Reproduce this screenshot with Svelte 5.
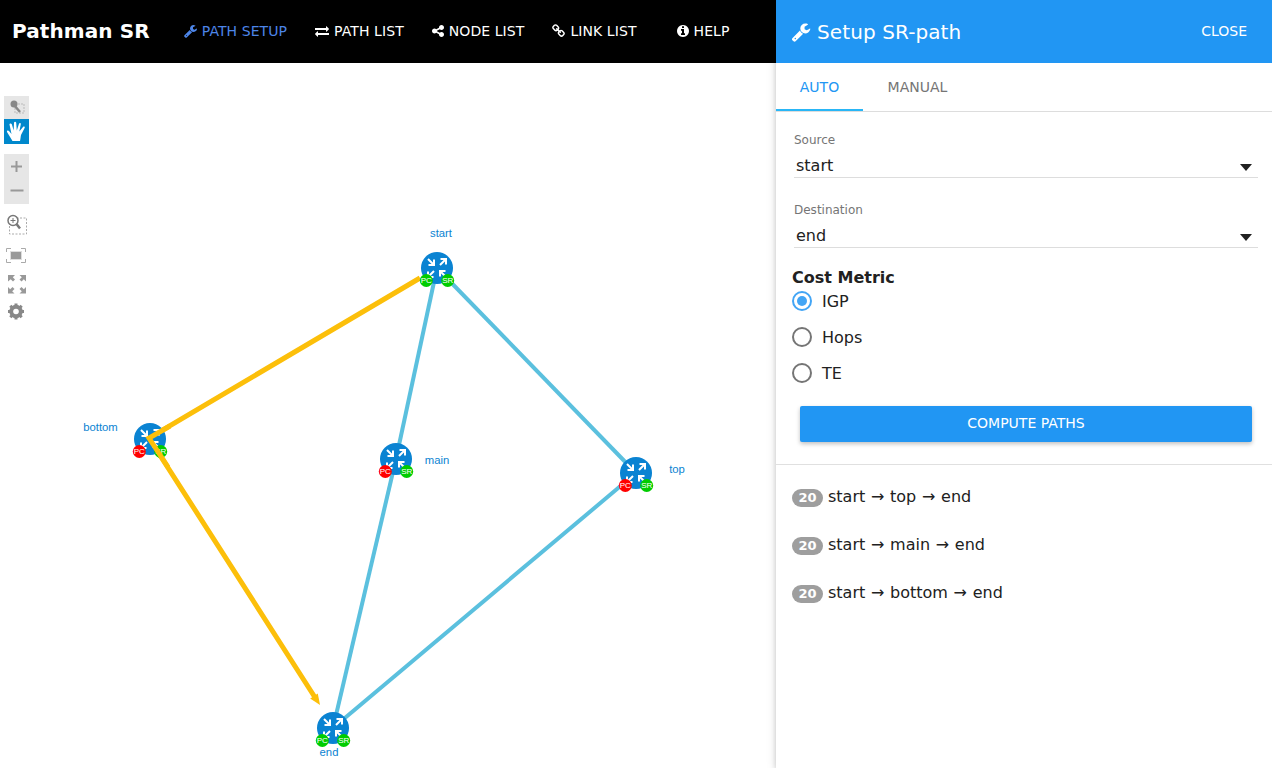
<script>
    const icons = {
        wrench: "M448 1472q0-26-19-45t-45-19-45 19-19 45 19 45 45 19 45-19 19-45zm644-420l-682 682q-37 37-90 37-52 0-91-37l-106-108q-38-36-38-90 0-53 38-91l681-681q39 98 114.5 173.5t173.5 114.5zm634-435q0 39-23 106-47 134-164.5 217.5t-258.5 83.5q-185 0-316.5-131.5t-131.5-316.5 131.5-316.5 316.5-131.5q58 0 121.5 16.5t107.5 46.5q16 11 16 28t-16 28l-293 169v224l193 107q5-3 79-48.5t135.5-81 70.5-35.5q15 0 23.5 10t8.5 25z",
        exchange: "M1792 1184v192q0 13-9.5 22.5t-22.5 9.5h-1376v192q0 13-9.5 22.5t-22.5 9.5q-12 0-24-10l-319-320q-9-9-9-22 0-14 9-23l320-320q9-9 23-9 13 0 22.5 9.5t9.5 22.5v192h1376q13 0 22.5 9.5t9.5 22.5zm0-544q0 14-9 23l-320 320q-9 9-23 9-13 0-22.5-9.5t-9.5-22.5v-192h-1376q-13 0-22.5-9.5t-9.5-22.5v-192q0-13 9.5-22.5t22.5-9.5h1376v-192q0-14 9-23t23-9q12 0 24 10l319 319q9 9 9 23z",
        share: "M1344 1024q133 0 226.5 93.5t93.5 226.5-93.5 226.5-226.5 93.5-226.5-93.5-93.5-226.5q0-12 2-34l-360-180q-92 86-218 86-133 0-226.5-93.5t-93.5-226.5 93.5-226.5 226.5-93.5q126 0 218 86l360-180q-2-22-2-34 0-133 93.5-226.5t226.5-93.5 226.5 93.5 93.5 226.5-93.5 226.5-226.5 93.5q-126 0-218-86l-360 180q2 22 2 34t-2 34l360 180q92-86 218-86z",
        link: "M1520 1216q0-40-28-68l-208-208q-28-28-68-28-42 0-72 32 3 3 19 18.5t21.5 21.5 15 19 13 25.5 3.5 27.5q0 40-28 68t-68 28q-15 0-27.5-3.5t-25.5-13-19-15-21.5-21.5-18.5-19q-33 31-33 73 0 40 28 68l206 207q27 27 68 27 40 0 68-26l147-146q28-28 28-67zm-703-705q0-40-28-68l-206-207q-28-28-68-28-39 0-68 27l-147 146q-28 28-28 67 0 40 28 68l208 208q27 27 68 27 42 0 72-31-3-3-19-18.5t-21.5-21.5-15-19-13-25.5-3.5-27.5q0-40 28-68t68-28q15 0 27.5 3.5t25.5 13 19 15 21.5 21.5 18.5 19q33-31 33-73zm895 705q0 120-85 203l-147 146q-83 83-203 83-121 0-204-85l-206-207q-83-83-83-203 0-123 88-209l-88-88q-86 88-208 88-120 0-204-84l-208-208q-84-84-84-204t85-203l147-146q83-83 203-83 121 0 204 85l206 207q83 83 83 203 0 123-88 209l88 88q86-88 208-88 120 0 204 84l208 208q84 84 84 204z",
        info: "M1152 1376v-160q0-14-9-23t-23-9h-96v-512q0-14-9-23t-23-9h-320q-14 0-23 9t-9 23v160q0 14 9 23t23 9h96v320h-96q-14 0-23 9t-9 23v160q0 14 9 23t23 9h448q14 0 23-9t9-23zm-128-896v-160q0-14-9-23t-23-9h-192q-14 0-23 9t-9 23v160q0 14 9 23t23 9h192q14 0 23-9t9-23zm640 416q0 209-103 385.5t-279.5 279.5-385.5 103-385.5-103-279.5-279.5-103-385.5 103-385.5 279.5-279.5 385.5-103 385.5 103 279.5 279.5 103 385.5z"
    };

    const navItems = [
        { label: "PATH SETUP", icon: "wrench", w: 13, active: true },
        { label: "PATH LIST", icon: "exchange", w: 14 },
        { label: "NODE LIST", icon: "share", w: 12 },
        { label: "LINK LIST", icon: "link", w: 13 },
        { label: "HELP", icon: "info", w: 12, help: true }
    ];

    const nodes = {
        start: { x: 437, y: 205, lx: 441, ly: 174, pc: "#00cc00" },
        bottom: { x: 150, y: 376, lx: 100.500, ly: 368, pc: "#ff0000" },
        main: { x: 396, y: 396, lx: 437, ly: 401, pc: "#ff0000" },
        top: { x: 636, y: 410, lx: 677, ly: 410, pc: "#ff0000" },
        end: { x: 333, y: 665, lx: 329, ly: 693, pc: "#00cc00" }
    };

    const links = [
        ["start", "main"],
        ["start", "top"],
        ["main", "end"],
        ["top", "end"]
    ];

    const routes = [
        { cost: 20, hops: "start → top → end" },
        { cost: 20, hops: "start → main → end" },
        { cost: 20, hops: "start → bottom → end" }
    ];

    const metrics = ["IGP", "Hops", "TE"];
</script>

<div class="page">
    <div class="left">
        <nav>
            <span class="brand">Pathman SR</span>
            {#each navItems as item}
                <a href="#top" class:active={item.active} class:help={item.help}>
                    <svg class="fa" width={item.w} height="14" viewBox="0 0 1792 1792" preserveAspectRatio="xMidYMid slice"><path d={icons[item.icon]} /></svg>{item.label}
                </a>
            {/each}
        </nav>

        <div class="canvas">
            <svg class="graph" width="776" height="705" viewBox="0 0 776 705">
                <defs>
                    <g id="arrows" fill="none" stroke="#fff" stroke-width="2">
                        <path d="M-9-9L-3-3M-8.500-3H-3V-8.500" />
                        <path d="M3-3L9-9M3.500-9H9V-3.500" />
                        <path d="M-3 3L-9 9M-9 3.500V9H-3.500" />
                        <path d="M9 9L3 3M3 8.500V3H8.500" />
                    </g>
                </defs>

                {#each links as [a, b]}
                    <line x1={nodes[a].x} y1={nodes[a].y} x2={nodes[b].x} y2={nodes[b].y} class="link" />
                {/each}

                <polyline points="420,215 149,375 316,636" class="route" />
                <path d="M320 642L310.200 635.400L317.800 630.600Z" fill="#fcbf0a" />

                {#each Object.entries(nodes) as [name, n]}
                    <g transform="translate({n.x} {n.y})">
                        <circle r="16" fill="#0a83d2" />
                        <use href="#arrows" />
                        <circle cx="-10.700" cy="12.500" r="6.500" fill={n.pc} />
                        <circle cx="10.700" cy="12.500" r="6.500" fill="#00cc00" />
                        <text x="-10.700" y="15.300" class="badge">PC</text>
                        <text x="10.700" y="15.300" class="badge">SR</text>
                    </g>
                    <text x={n.lx} y={n.ly} class="node-label">{name}</text>
                {/each}

                <!-- the route runs over the bottom node, not under it -->
                <polyline points="168,404 149,375 170,363" class="route" />
            </svg>

            <div class="tools">
                <div class="tool-group">
                    <button class="tool select-tool"><svg viewBox="0 0 25 23" width="25" height="23">
                        <rect x="11" y="8" width="9" height="9" fill="none" stroke="#bbb" stroke-dasharray="2 1" />
                        <circle cx="10" cy="8" r="3.500" fill="#888" />
                        <path d="M10 9L16 16" stroke="#888" stroke-width="2.500" />
                    </svg></button>
                    <button class="tool on"><svg viewBox="0 0 25 25" width="25" height="25">
                        <path d="M8.500 22L3 13C2.500 11.500 4.200 11 5 12L7.500 15L5.500 5.500C5.500 4.200 7.300 4 7.800 5.300L9.700 11.500L10 3.800C10.200 2.500 12 2.500 12.200 3.800L12.800 11.500L15 4.800C15.500 3.600 17 4 16.800 5.300L15.300 12.500L19 8C19.900 7 21.300 7.800 20.600 9L17 16C16.500 18.500 16.500 20 16 22Z" fill="#fff" />
                    </svg></button>
                </div>
                <div class="tool-group zoom">
                    <button class="tool"><svg viewBox="0 0 25 25" width="25" height="25"><path d="M7 12.500H18M12.500 7V18" stroke="#999" stroke-width="2" /></svg></button>
                    <button class="tool"><svg viewBox="0 0 25 25" width="25" height="25"><path d="M6.500 11.500H19.500" stroke="#999" stroke-width="2" /></svg></button>
                </div>
                <button class="tool box"><svg viewBox="0 0 25 25" width="25" height="25">
                    <rect x="5.500" y="7" width="17" height="16" fill="none" stroke="#aaa" stroke-dasharray="2 1.500" />
                    <circle cx="9" cy="9.500" r="5" fill="#fff" stroke="#777" stroke-width="1.500" />
                    <path d="M12.500 13L16 17.500" stroke="#777" stroke-width="2.500" />
                    <path d="M6.500 9.500H11.500M9 7V12" stroke="#777" />
                </svg></button>
                <button class="tool fit"><svg viewBox="0 0 25 25" width="25" height="25">
                    <path d="M2.500 9V5.500H7M17 5.500H21.500V9M2.500 16V19.500H7M17 19.500H21.500V16" fill="none" stroke="#aaa" />
                    <rect x="6.500" y="8.500" width="11" height="8" fill="#999" stroke="#ddd" />
                </svg></button>
                <button class="tool expand"><svg viewBox="0 0 25 25" width="25" height="25" fill="#999">
                    <path d="M4 3H11L8.800 5.200L11 7.500L9 9.500L6.700 7.200L4 9.500Z" />
                    <path d="M22 3V9.500L19.800 7.200L17.500 9.500L15.500 7.500L17.800 5.200L15.500 3Z" />
                    <path d="M4 21.500V15L6.200 17.200L8.500 15L10.500 17L8.200 19.300L10.500 21.500Z" />
                    <path d="M22 21.500H15.500L17.800 19.300L15.500 17L17.500 15L19.800 17.200L22 15Z" />
                </svg></button>
                <button class="tool gear"><svg viewBox="0 0 25 25" width="25" height="25">
                    <circle cx="12" cy="12.500" r="5" fill="none" stroke="#888" stroke-width="3.500" />
                    <path d="M12 4.500V20.500M4 12.500H20M6.300 6.800L17.700 18.200M17.700 6.800L6.300 18.200" stroke="#888" stroke-width="3" />
                    <circle cx="12" cy="12.500" r="2.800" fill="#fff" />
                </svg></button>
            </div>
        </div>
    </div>

    <aside>
        <header>
            <svg class="fa big" viewBox="0 0 1792 1792"><path d={icons.wrench} /></svg>
            <h2>Setup SR-path</h2>
            <span class="close">CLOSE</span>
        </header>

        <div class="tabs">
            <span class="tab current">AUTO</span>
            <span class="tab">MANUAL</span>
        </div>

        <div class="form">
            <div class="field">
                <span class="field-label">Source</span>
                <div class="select">start</div>
            </div>
            <div class="field">
                <span class="field-label">Destination</span>
                <div class="select">end</div>
            </div>

            <h4>Cost Metric</h4>
            {#each metrics as metric, i}
                <div class="radio">
                    <span class="dot" class:checked={i === 0}></span>{metric}
                </div>
            {/each}

            <button class="compute">COMPUTE PATHS</button>
        </div>

        <ul>
            {#each routes as route}
                <li><span class="cost">{route.cost}</span>{route.hops}</li>
            {/each}
        </ul>
    </aside>
</div>

<style>
    :global(body) {
        margin: 0;
        overflow: hidden;
        font-family: "DejaVu Sans", sans-serif;
        color: #212121;
        background: #fff;
    }

    .page {
        display: flex;
        width: 1272px;
        height: 768px;
    }

    .left {
        width: 776px;
        flex: none;
    }

    nav {
        display: flex;
        align-items: center;
        height: 63px;
        box-sizing: border-box;
        padding: 0 0 1px 12px;
        background: #000;
    }

    .brand {
        color: #fff;
        font-size: 20px;
        font-weight: 700;
        letter-spacing: 0.1px;
        margin-right: 34px;
    }

    nav a {
        display: flex;
        align-items: center;
        color: #fff;
        font-size: 14px;
        letter-spacing: 0.08px;
        text-decoration: none;
        margin-right: 28px;
    }

    nav a.active {
        color: #4d85e8;
    }

    nav a.help {
        margin-left: 12px;
    }

    .fa {
        flex: none;
        margin-right: 5px;
        fill: currentColor;
    }

    .canvas {
        position: relative;
        height: 705px;
    }

    .graph {
        display: block;
    }

    .link {
        stroke: #5bc0de;
        stroke-width: 4;
    }

    .route {
        fill: none;
        stroke: #fcbf0a;
        stroke-width: 5;
    }

    .node-label {
        font-family: "Liberation Sans", sans-serif;
        font-size: 11.300px;
        fill: #0a83d2;
        text-anchor: middle;
    }

    .badge {
        font-family: "Liberation Sans", sans-serif;
        font-size: 8px;
        fill: #fff;
        text-anchor: middle;
    }

    .tools {
        position: absolute;
        left: 4px;
        top: 33px;
        display: flex;
        flex-direction: column;
        width: 25px;
    }

    .tool-group {
        background: #e6e6e6;
    }

    .tool-group.zoom {
        margin-top: 10px;
    }

    .tool {
        display: block;
        width: 25px;
        height: 25px;
        padding: 0;
        border: 0;
        background: none;
    }

    .tool svg {
        display: block;
    }

    .tool.select-tool {
        height: 23px;
    }

    .tool.on {
        background: #0088cc;
    }

    .tool.box {
        margin-top: 7px;
    }

    .tool.fit {
        margin-top: 7px;
    }

    .tool.expand {
        margin-top: 4px;
    }

    .tool.gear {
        margin-top: 2px;
    }

    aside {
        position: relative;
        flex: 1;
        display: flex;
        flex-direction: column;
        box-shadow: 0 2px 5px rgba(0, 0, 0, 0.16), 0 2px 10px rgba(0, 0, 0, 0.12);
    }

    header {
        display: flex;
        align-items: center;
        height: 63px;
        box-sizing: border-box;
        padding: 0 25px 0 15px;
        background: #2196f3;
        color: #fff;
    }

    .fa.big {
        width: 20px;
        height: 20px;
        margin-right: 6px;
    }

    h2 {
        flex: 1;
        margin: 0;
        font-size: 20px;
        font-weight: 400;
        letter-spacing: 0.1px;
    }

    .close {
        padding-bottom: 2px;
        font-size: 14px;
    }

    .tabs {
        display: flex;
        flex: none;
        height: 49px;
        box-sizing: border-box;
        border-bottom: 1px solid #ddd;
    }

    .tab {
        width: 87px;
        height: 48px;
        box-sizing: border-box;
        padding-top: 16px;
        text-align: center;
        font-size: 14px;
        color: #757575;
    }

    .tab.current {
        color: #2196f3;
        border-bottom: 2px solid #29b6f6;
    }

    .tab + .tab {
        width: 109px;
    }

    .form {
        flex: none;
        height: 353px;
        box-sizing: border-box;
        padding: 21px 14px 0 16px;
        border-bottom: 1px solid #e0e0e0;
    }

    .field {
        margin: 0 0 25px 2px;
    }

    .field-label {
        display: block;
        font-size: 12px;
        line-height: 14px;
        color: #757575;
    }

    .select {
        position: relative;
        height: 31px;
        box-sizing: border-box;
        padding: 10px 2px 0;
        font-size: 16px;
        line-height: 18px;
        border-bottom: 1px solid #ddd;
    }

    .select::after {
        content: "";
        position: absolute;
        right: 6px;
        top: 17px;
        border: 6px solid transparent;
        border-top: 7px solid #212121;
        border-bottom: 0;
    }

    h4 {
        margin: -5px 0 -5px;
        font-size: 16px;
        line-height: 20px;
        font-weight: 700;
    }

    .radio {
        display: flex;
        align-items: center;
        height: 36px;
        font-size: 16px;
    }

    .dot {
        position: relative;
        width: 20px;
        height: 20px;
        box-sizing: border-box;
        margin-right: 10px;
        border: 2px solid #757575;
        border-radius: 50%;
    }

    .dot.checked {
        border-color: #42a5f5;
    }

    .dot.checked::after {
        content: "";
        position: absolute;
        inset: 3px;
        border-radius: 50%;
        background: #42a5f5;
    }

    .compute {
        display: block;
        width: 452px;
        height: 36px;
        margin: 15px 0 0 8px;
        padding: 0 0 2px;
        border: 0;
        border-radius: 2px;
        background: #2196f3;
        color: #fff;
        font-family: inherit;
        font-size: 14px;
        box-shadow: 0 2px 4px rgba(0, 0, 0, 0.25);
    }

    ul {
        list-style: none;
        margin: 0;
        padding: 7px 16px 0;
    }

    li {
        display: flex;
        align-items: center;
        height: 48px;
        font-size: 16px;
        word-spacing: 0.6px;
    }

    .cost {
        display: inline-block;
        width: 31px;
        height: 18px;
        margin: 4px 5px 0 0;
        border-radius: 9px;
        background: #9e9e9e;
        color: #fff;
        font-size: 13px;
        font-weight: 700;
        line-height: 18px;
        text-align: center;
    }
</style>
